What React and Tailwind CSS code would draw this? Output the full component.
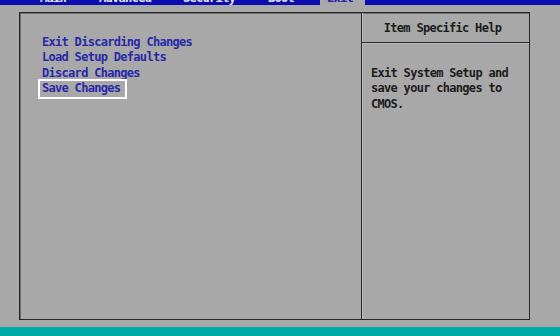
const tabs = [
  { label: 'Main', w: 'w-[59px]' },
  { label: 'Advanced', w: 'w-[84px]' },
  { label: 'Security', w: 'w-[85px]' },
  { label: 'Boot', w: 'w-[52px]' },
]

const items = ['Exit Discarding Changes', 'Load Setup Defaults', 'Discard Changes', 'Save Changes']

export default function App() {
  const selected = 3
  return (
    <div
      className="w-[560px] h-[336px] bg-[#a8a8a8] flex flex-col overflow-hidden text-[12px] tracking-[-0.7px] font-semibold"
      style={{ fontFamily: '"DejaVu Sans Mono", "Liberation Mono", monospace' }}
    >
      {/* menu bar, scrolled mostly out of view */}
      <div className="h-[5px] bg-[#0c0cb0] flex overflow-hidden pl-[40px] shrink-0">
        {tabs.map((t) => (
          <span key={t.label} className={`${t.w} mt-[-9px] leading-[15px] text-[#e8e8f8]`}>
            {t.label}
          </span>
        ))}
        <span className="w-[45px] h-[5px] bg-[#a8a8a8] pl-[7px]">
          <span className="block mt-[-9px] leading-[15px] text-[#2424a8]">Exit</span>
        </span>
      </div>

      <div className="flex-1 pl-[19px] pr-[30px] pt-[7px] pb-[7px]">
        <div className="h-full flex border border-[#262626] shadow-[inset_1px_1px_0_#6c6c6c]">
          <div className="flex-1 pl-[20px] pt-[22px]">
            <ul className="flex flex-col items-start">
              {items.map((it, i) => (
                <li
                  key={it}
                  className={`leading-[15.4px] pl-[2px] pr-[5px] text-[#2828a8] ${
                    i === selected ? 'shadow-[0_0_0_2px_#ffffff]' : ''
                  }`}
                >
                  {it}
                </li>
              ))}
            </ul>
          </div>

          <div className="w-[168px] border-l border-[#262626] shadow-[inset_1px_0_0_#bcbcbc] flex flex-col">
            <div className="h-[30px] border-b border-[#262626] shadow-[0_1px_0_#bcbcbc] flex items-center justify-center pr-[6px] text-[#1c1c1c]">
              Item Specific Help
            </div>
            <p className="pl-[9px] pt-[23px] leading-[15.3px] text-[#1c1c1c]">
              Exit System Setup and
              <br />
              save your changes to
              <br />
              CMOS.
            </p>
          </div>
        </div>
      </div>

      <div className="h-[9px] bg-[#00aca8] shrink-0" />
    </div>
  )
}
